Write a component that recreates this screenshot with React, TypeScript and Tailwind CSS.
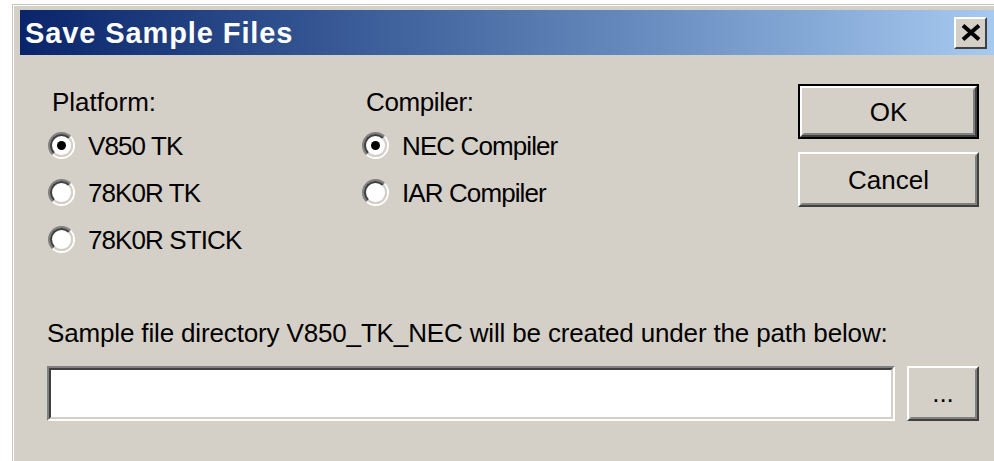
import React from "react";

const face = "font-['Liberation_Sans',Arial,sans-serif]";

function Radio({ checked, label }: { checked?: boolean; label: string }) {
  return (
    <div className="flex h-[47px] items-center">
      <div className="h-[27px] w-[27px] shrink-0 rounded-full border-2 border-t-[#808080] border-l-[#808080] border-r-white border-b-white">
        <div className="flex h-full w-full items-center justify-center rounded-full border-2 border-t-[#404040] border-l-[#404040] border-r-[#d4d0c8] border-b-[#d4d0c8] bg-white">
          {checked && <div className="h-[9px] w-[9px] rounded-full bg-black" />}
        </div>
      </div>
      <span className="ml-[13px] text-[26px] leading-[30px] tracking-[-0.9px] text-black">{label}</span>
    </div>
  );
}

function RaisedButton({ children, className }: { children: React.ReactNode; className?: string }) {
  return (
    <div className={"border-2 border-t-white border-l-white border-r-[#404040] border-b-[#404040] bg-[#d4d0c8] " + (className ?? "")}>
      <div className="flex h-full w-full items-center justify-center border-2 border-t-[#d4d0c8] border-l-[#d4d0c8] border-r-[#808080] border-b-[#808080] text-[26px] leading-[30px] text-black">
        {children}
      </div>
    </div>
  );
}

export default function App() {
  return (
    <div className={"h-[461px] w-[994px] overflow-hidden bg-white pl-[12px] pt-[4px] " + face}>
      {/* window frame */}
      <div className="h-[470px] w-[1000px] border-l border-t border-[#c8c4bc] bg-[#d4d0c8]">
        <div className="h-full w-full border-l border-t border-white pl-[6px] pt-[4px]">
          <div className="w-[976px]">
            {/* caption */}
            <div className="flex h-[45px] items-center bg-gradient-to-r from-[#0a246a] to-[#a6caf0] pl-[5px]">
              <span className="text-[29px] font-bold leading-[34px] tracking-[0.9px] text-white">Save Sample Files</span>
              <div className="ml-auto mr-[9px] flex h-[32px] w-[33px] items-center justify-center border-2 border-t-white border-l-white border-r-[#404040] border-b-[#404040] bg-[#d4d0c8]">
                <svg width="22" height="17" viewBox="0 0 22 17">
                  <path d="M3 1.5 L19 15.5 M19 1.5 L3 15.5" stroke="#000" strokeWidth="4" fill="none" />
                </svg>
              </div>
            </div>

            {/* client area */}
            <div className="pl-[27px] pr-[17px] pt-[29px]">
              <div className="flex items-start">
                <div className="ml-[1px] mt-[3px] w-[314px]">
                  <div className="pl-[4px] text-[26px] leading-[30px] text-black">Platform:</div>
                  <div className="mt-[5px]">
                    <Radio checked label="V850 TK" />
                    <Radio label="78K0R TK" />
                    <Radio label="78K0R STICK" />
                  </div>
                </div>
                <div className="mt-[3px]">
                  <div className="pl-[4px] text-[26px] leading-[30px] tracking-[-0.4px] text-black">Compiler:</div>
                  <div className="mt-[5px]">
                    <Radio checked label="NEC Compiler" />
                    <Radio label="IAR Compiler" />
                  </div>
                </div>
                <div className="ml-auto flex w-[181px] flex-col gap-[13px]">
                  <div className="h-[55px] border-2 border-black">
                    <RaisedButton className="h-full w-full">OK</RaisedButton>
                  </div>
                  <RaisedButton className="h-[55px] w-full">Cancel</RaisedButton>
                </div>
              </div>

              <div className="mt-[55px] text-[26px] leading-[30px] tracking-[-0.15px] text-black">
                Sample file directory V850_TK_NEC will be created under the path below:
              </div>

              <div className="mt-[18px] flex items-start">
                <div className="h-[55px] w-[848px] border-2 border-t-[#808080] border-l-[#808080] border-r-white border-b-white">
                  <div className="h-full w-full border-2 border-t-[#404040] border-l-[#404040] border-r-[#d4d0c8] border-b-[#d4d0c8] bg-white" />
                </div>
                <RaisedButton className="ml-auto h-[55px] w-[72px]">
                  <span className="pb-[2px]">...</span>
                </RaisedButton>
              </div>
            </div>
          </div>
        </div>
      </div>
    </div>
  );
}
